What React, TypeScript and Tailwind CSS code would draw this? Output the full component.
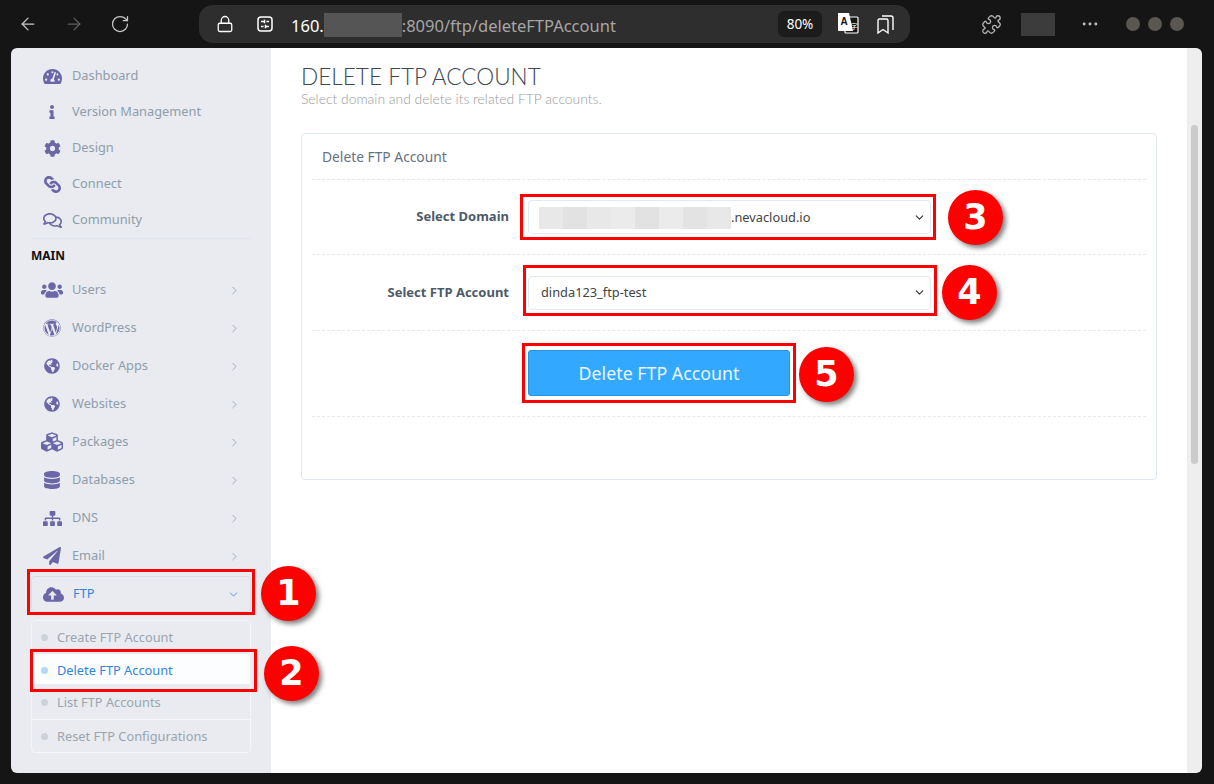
import type { ReactNode } from "react";
import { ArrowLeft, ArrowRight, ChevronDown, ChevronRight, Lock, MoreHorizontal, Puzzle, RotateCw } from "lucide-react";
import {
  FaCloudUploadAlt,
  FaCog,
  FaCubes,
  FaDatabase,
  FaGlobeAmericas,
  FaInfo,
  FaLink,
  FaPaperPlane,
  FaRegComments,
  FaSitemap,
  FaTachometerAlt,
  FaUsers,
  FaWordpress,
} from "react-icons/fa";

const topItems = [
  { label: "Dashboard", icon: <FaTachometerAlt className="w-[19px] h-[19px]" /> },
  { label: "Version Management", icon: <FaInfo className="w-[14px] h-[14px]" /> },
  { label: "Design", icon: <FaCog className="w-[17px] h-[17px]" /> },
  { label: "Connect", icon: <FaLink className="w-[17px] h-[17px] rotate-90" /> },
  { label: "Community", icon: <FaRegComments className="w-[19px] h-[19px]" /> },
];

const mainItems = [
  { label: "Users", icon: <FaUsers className="w-[22px] h-[22px]" /> },
  { label: "WordPress", icon: <FaWordpress className="w-[18px] h-[18px]" /> },
  { label: "Docker Apps", icon: <FaGlobeAmericas className="w-[16px] h-[16px]" /> },
  { label: "Websites", icon: <FaGlobeAmericas className="w-[16px] h-[16px]" /> },
  { label: "Packages", icon: <FaCubes className="w-[22px] h-[22px]" /> },
  { label: "Databases", icon: <FaDatabase className="w-[16px] h-[18px]" /> },
  { label: "DNS", icon: <FaSitemap className="w-[19px] h-[19px]" /> },
  { label: "Email", icon: <FaPaperPlane className="w-[18px] h-[18px]" /> },
];

const subItems = ["Create FTP Account", "Delete FTP Account", "List FTP Accounts", "Reset FTP Configurations"];

const IconSlot = ({ children }: { children: ReactNode }) => (
  <span className="w-[24px] flex items-center justify-center text-[#6b66a8]">{children}</span>
);

const SiteInfoIcon = () => (
  <svg width="18" height="18" viewBox="0 0 18 18" fill="none" stroke="#fff" strokeWidth="1.5">
    <rect x="2" y="2" width="14" height="14" rx="3" />
    <path d="M5 6.5h3M10.5 6.5H13M5 11.5h2.5M10 11.5h3M8.5 4.8v3.4M9.5 9.8v3.4" />
  </svg>
);

const TranslateIcon = () => (
  <svg width="24" height="24" viewBox="0 0 24 24">
    <rect x="9" y="5" width="13" height="16" rx="1" fill="#151515" stroke="#fff" strokeWidth="1.2" />
    <path d="M2 1h11l4 18H3a1 1 0 0 1-1-1z" fill="#fff" />
    <text x="4.5" y="13" fontSize="10" fontWeight="700" fontFamily="Liberation Sans, sans-serif" fill="#151515">
      A
    </text>
    <text x="14.5" y="17" fontSize="7" fontFamily="Noto Sans CJK SC, sans-serif" fill="#fff">
      字
    </text>
  </svg>
);

const BookmarksIcon = () => (
  <svg width="20" height="22" viewBox="0 0 20 22" fill="none" stroke="#fff" strokeWidth="1.4">
    <path d="M2 7.5a1.5 1.5 0 0 1 1.5-1.5h7a1.5 1.5 0 0 1 1.500 1.500V20l-5-3.500L2 20z" />
    <path d="M6 3h9a2 2 0 0 1 2 2v12" />
  </svg>
);

const Toolbar = () => (
  <div className="h-[48px] flex items-center text-white">
    <div className="w-[199px] flex items-center pl-[18px] gap-[26px]">
      <ArrowLeft className="w-[20px] h-[20px] text-[#c8c8c8]" strokeWidth={1.5} />
      <ArrowRight className="w-[20px] h-[20px] text-[#5f5f5f]" strokeWidth={1.5} />
      <RotateCw className="w-[20px] h-[20px] text-[#c8c8c8]" strokeWidth={1.5} />
    </div>
    <div className="w-[711px] h-[38px] rounded-[14px] bg-[#2e2e2e] flex items-center pl-[17px] pr-[14px]">
      <Lock className="w-[18px] h-[18px]" strokeWidth={1.7} />
      <span className="ml-[22px] flex"><SiteInfoIcon /></span>
      <span className="ml-[17px] mt-[4px] text-[16.500px] text-white">160.</span>
      <span className="w-[78px] h-[24px] mt-[2px] bg-[#555555]" />
      <span className="mt-[4px] text-[16.500px] text-[#a6a6a6]">:8090/ftp/deleteFTPAccount</span>
      <span className="ml-auto w-[44px] h-[26px] rounded-[6px] bg-[#1c1c1c] flex items-center justify-center text-[13.500px]">
        80%
      </span>
      <span className="ml-[14px] flex"><TranslateIcon /></span>
      <span className="ml-[16px] flex"><BookmarksIcon /></span>
    </div>
    <Puzzle className="ml-[71px] w-[21px] h-[21px] text-[#b5b5b5]" strokeWidth={1.5} />
    <span className="ml-[19px] w-[34px] h-[23px] bg-[#3c3c3c]" />
    <MoreHorizontal className="ml-[25px] w-[20px] h-[20px] text-[#c8c8c8]" strokeWidth={1.5} />
    <div className="ml-[26px] flex gap-[8px]">
      <span className="w-[14px] h-[14px] rounded-full bg-[#5a5651]" />
      <span className="w-[14px] h-[14px] rounded-full bg-[#5a5651]" />
      <span className="w-[14px] h-[14px] rounded-full bg-[#5a5651]" />
    </div>
  </div>
);

const Sidebar = () => (
  <aside className="w-[260px] shrink-0 bg-[#e9ebf1] pl-[20px] pr-[20px] pt-[10px] text-[12.800px] text-[#8e9dab]">
    {topItems.map((item) => (
      <div key={item.label} className="h-[36px] flex items-center gap-[8px] pl-[9px]">
        <IconSlot>{item.icon}</IconSlot>
        <span>{item.label}</span>
      </div>
    ))}
    <div className="border-t border-[#dde4ec] h-[34px] flex items-center text-[12px] font-bold text-[#111111]">
      MAIN
    </div>
    <div className="mt-[-1px]">
      {mainItems.map((item) => (
        <div key={item.label} className="h-[38px] flex items-center gap-[8px] pl-[9px] pr-[10px]">
          <IconSlot>{item.icon}</IconSlot>
          <span>{item.label}</span>
          <ChevronRight className="ml-auto w-[13px] h-[13px] text-[#8e9dab]" strokeWidth={1.5} />
        </div>
      ))}
    </div>
    <div className="h-[36px] mt-[1px] flex items-center gap-[8px] pl-[9px] pr-[10px] rounded-[4px] border border-[#d9dde4] text-[#2f86dd]">
      <IconSlot><FaCloudUploadAlt className="w-[21px] h-[21px]" /></IconSlot>
      <span>FTP</span>
      <ChevronDown className="ml-auto w-[13px] h-[13px]" strokeWidth={1.5} />
    </div>
    <div className="mt-[8px] rounded-[4px] border border-[#f4f5f8] h-[133px] flex flex-col">
      {subItems.map((label, i) => (
        <div
          key={label}
          className={
            label === "Delete FTP Account"
              ? "h-[33px] bg-[#fcfdfe] flex items-center gap-[9px] pl-[9px] pt-[3px] text-[#2f86dd] border-b-[3px] border-b-[#e9ebf1]"
              : i === 3
                ? "h-[33px] flex items-center gap-[9px] pl-[9px] text-[#9aa5b0] border-t border-[#f4f5f8]"
                : "h-[33px] flex items-center gap-[9px] pl-[9px] text-[#9aa5b0]"
          }
        >
          <span
            className={
              label === "Delete FTP Account"
                ? "w-[7px] h-[7px] rounded-full bg-[#b5d8f7]"
                : "w-[7px] h-[7px] rounded-full bg-[#cdd2d9]"
            }
          />
          <span>{label}</span>
        </div>
      ))}
    </div>
  </aside>
);

const BlurredDomain = () => {
  const shades = ["bg-[#e8e8e8]", "bg-[#e2e2e2]", "bg-[#e8e8e8]", "bg-[#ebebeb]", "bg-[#e2e2e2]", "bg-[#ebebeb]", "bg-[#e3e3e3]", "bg-[#e8e8e8]"];
  return (
    <span className="flex h-[22px] ml-[-2px]">
      {shades.map((shade, i) => (
        <span key={i} className={`${shade} w-[24px]`} />
      ))}
    </span>
  );
};

const FakeSelect = ({ children }: { children: ReactNode }) => (
  <div className="w-[403px] h-[34px] rounded-[4px] border border-[#e3e9f3] bg-white flex items-center pl-[12px] pr-[4px] text-[12.800px] text-[#444444]">
    <span className="flex items-center mt-[1px]">{children}</span>
    <ChevronDown className="ml-auto w-[13px] h-[13px] text-[#333333]" strokeWidth={2} />
  </div>
);

const FormRow = ({ label, height, children }: { label: string; height: string; children: ReactNode }) => (
  <div className={`${height} mx-[10px] flex items-center border-b border-dashed border-[#e8e8e8]`}>
    <div className="w-[197px] text-right text-[13px] font-bold text-[#4f5a68]">{label}</div>
    <div className="ml-[19px]">{children}</div>
  </div>
);

const MainPanel = () => (
  <main className="flex-1 bg-white pl-[30px] pr-[30px] pt-[16px]">
    <h1 className="font-['Lato'] font-light text-[22.600px] leading-[26px] text-[#3e4855]">DELETE FTP ACCOUNT</h1>
    <p className="mt-[2px] font-['Lato'] font-light text-[13.900px] leading-[14px] text-[#9a9a9a]">Select domain and delete its related FTP accounts.</p>
    <section className="mt-[27px] w-[856px] h-[347px] rounded-[4px] border border-[#dfe7f1]">
      <div className="h-[46px] mx-[10px] pl-[10px] pt-[1px] flex items-center border-b border-dashed border-[#e8e8e8] text-[13.800px] text-[#66727f]">
        Delete FTP Account
      </div>
      <FormRow label="Select Domain" height="h-[75px]">
        <FakeSelect>
          <BlurredDomain />
          <span>.nevacloud.io</span>
        </FakeSelect>
      </FormRow>
      <FormRow label="Select FTP Account" height="h-[76px]">
        <FakeSelect>dinda123_ftp-test</FakeSelect>
      </FormRow>
      <div className="h-[86px] mx-[10px] pl-[216px] pt-[19px] border-b border-dashed border-[#e8e8e8]">
        <button className="w-[262px] h-[46px] rounded-[3px] bg-[#33a8ff] border border-[#2a93e0] text-[17.800px] text-[#e8f5ff]">
          Delete FTP Account
        </button>
      </div>
    </section>
  </main>
);

// red callouts drawn over the screenshot
const boxes = [
  "left-[27px] top-[569px] w-[228px] h-[46px]",
  "left-[30px] top-[649px] w-[227px] h-[43px]",
  "left-[520px] top-[194px] w-[416px] h-[46px]",
  "left-[523px] top-[265px] w-[414px] h-[51px]",
  "left-[522px] top-[343px] w-[274px] h-[60px]",
];

const badges = [
  { n: 1, pos: "left-[261px] top-[566px]" },
  { n: 2, pos: "left-[264px] top-[646px]" },
  { n: 3, pos: "left-[948px] top-[190px]" },
  { n: 4, pos: "left-[942px] top-[265px]" },
  { n: 5, pos: "left-[799px] top-[347px]" },
];

export default function App() {
  return (
    <div className="relative w-[1214px] h-[784px] overflow-hidden bg-[#151515] font-['Noto_Sans',sans-serif]">
      <Toolbar />
      <div className="ml-[11px] w-[1191px] h-[725px] flex rounded-[6px] overflow-hidden">
        <Sidebar />
        <MainPanel />
        <div className="w-[15px] shrink-0 bg-[#eeeeee] pt-[77px] flex justify-center">
          <div className="w-[7px] h-[339px] rounded-full bg-[#cbcbcb]" />
        </div>
      </div>
      {boxes.map((pos) => (
        <div key={pos} className={`absolute ${pos} border-[3px] border-[#fe0000]`} />
      ))}
      {badges.map((b) => (
        <div
          key={b.n}
          className={`absolute ${b.pos} w-[55px] h-[55px] rounded-full bg-[#fe0000] shadow-[3px_3px_5px_rgba(0,0,0,0.5)] flex items-center justify-center font-['DejaVu_Sans',sans-serif] text-[35px] font-bold text-white`}
        >
          {b.n}
        </div>
      ))}
    </div>
  );
}
